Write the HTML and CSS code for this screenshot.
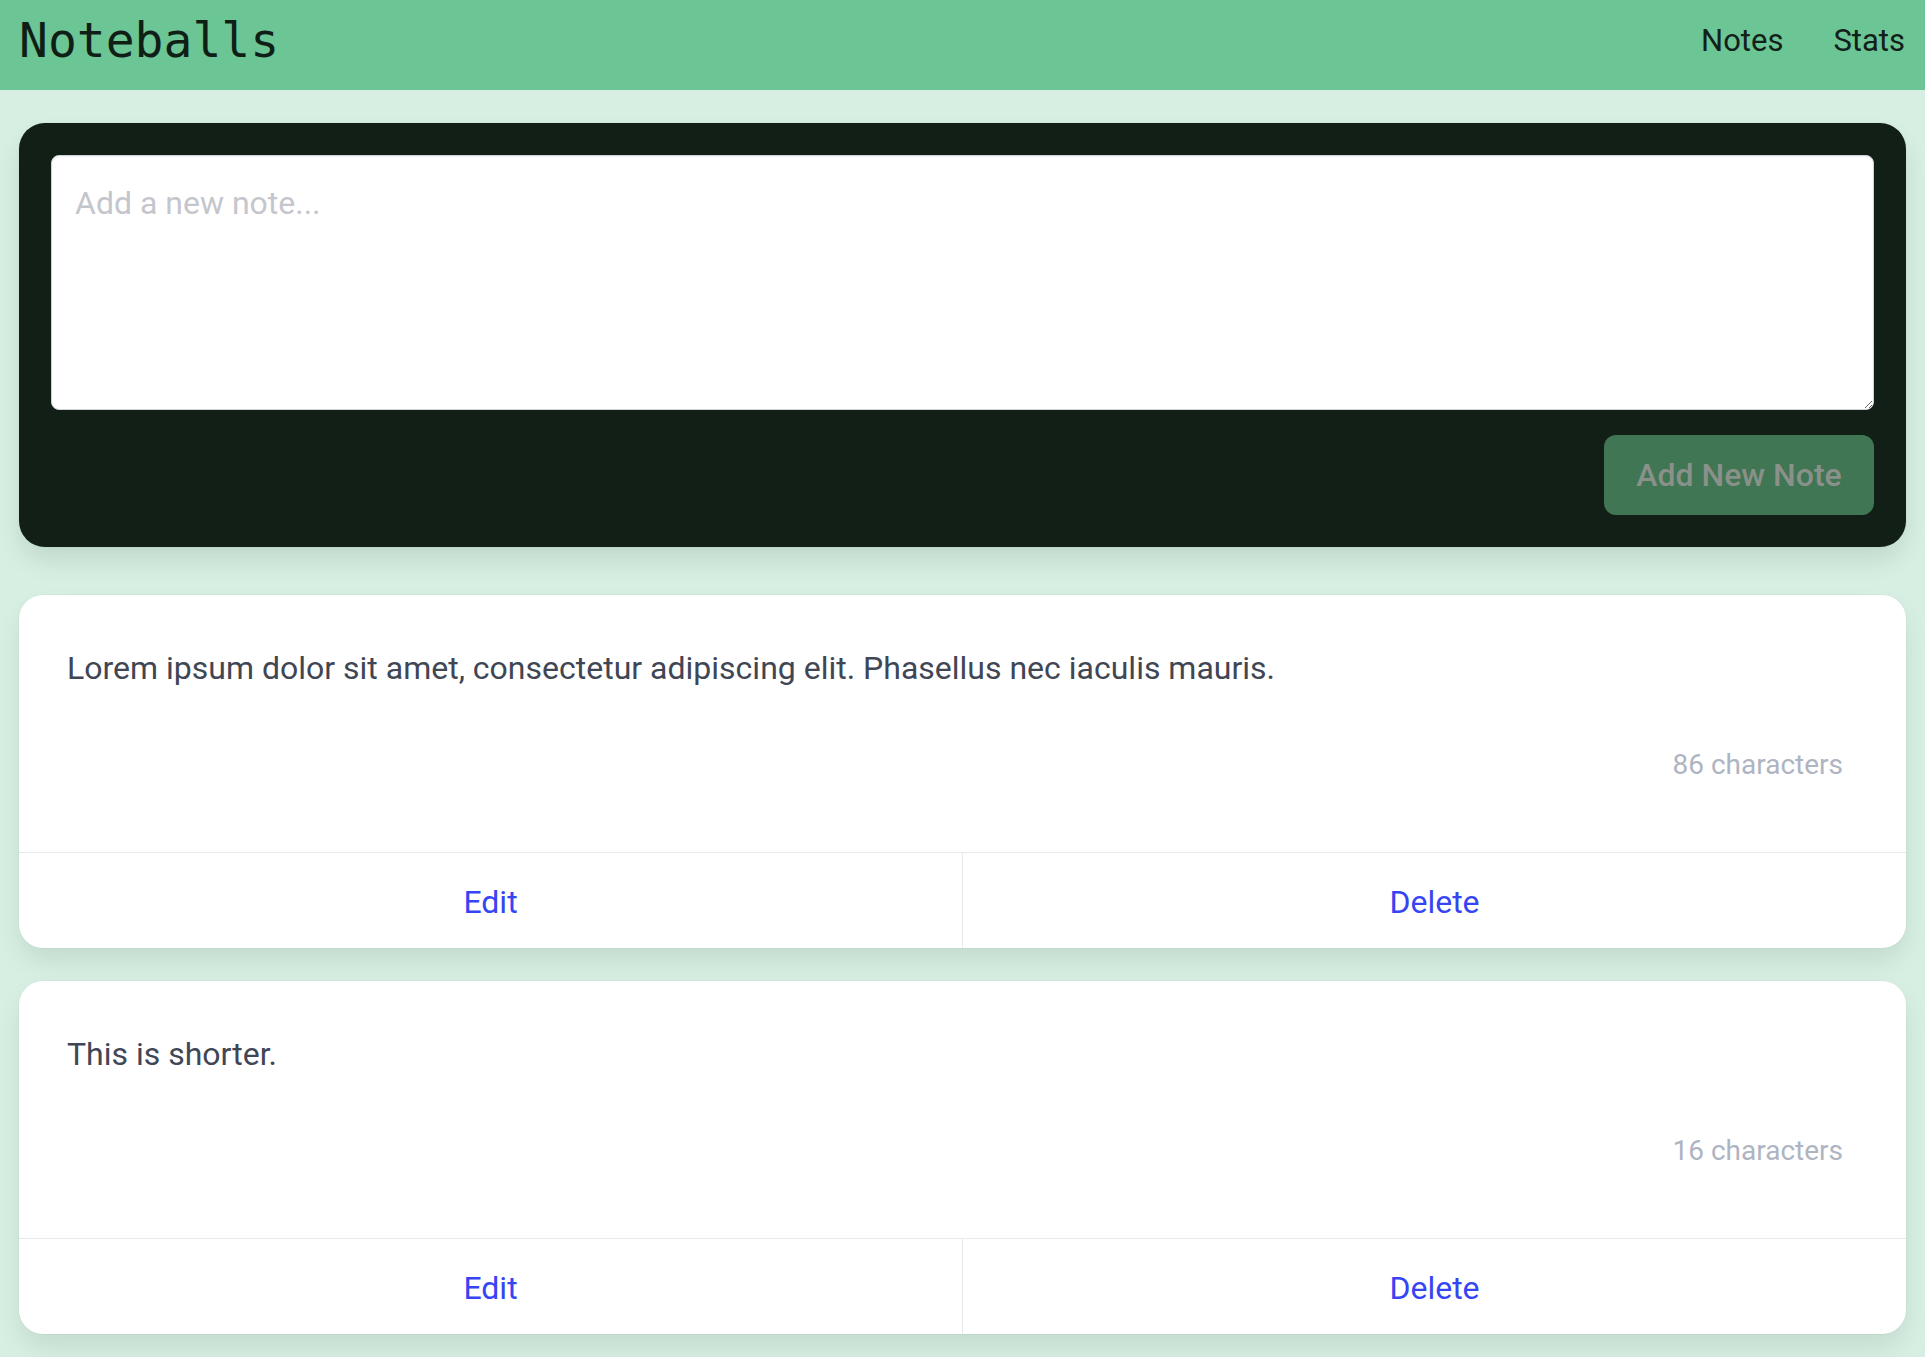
FILE: index.html
```html
<!DOCTYPE html>
<html lang="en">
<head>
<meta charset="utf-8">
<title>Noteballs</title>
<link rel="stylesheet" href="styles.css">
</head>
<body>
<nav class="navbar">
  <div class="brand">Noteballs</div>
  <div class="nav-links">
    <a class="nav-link" href="#">Notes</a>
    <a class="nav-link" href="#">Stats</a>
  </div>
</nav>
<main class="page">
  <section class="add-card">
    <textarea class="note-input" placeholder="Add a new note..."></textarea>
    <div class="add-actions">
      <button class="add-btn" disabled>Add New Note</button>
    </div>
  </section>

  <article class="note-card">
    <div class="note-content">
      <p class="note-text">Lorem ipsum dolor sit amet, consectetur adipiscing elit. Phasellus nec iaculis mauris.</p>
      <div class="note-chars">86 characters</div>
    </div>
    <footer class="note-footer">
      <a class="footer-item" href="#">Edit</a>
      <a class="footer-item" href="#">Delete</a>
    </footer>
  </article>

  <article class="note-card">
    <div class="note-content">
      <p class="note-text">This is shorter.</p>
      <div class="note-chars">16 characters</div>
    </div>
    <footer class="note-footer">
      <a class="footer-item" href="#">Edit</a>
      <a class="footer-item" href="#">Delete</a>
    </footer>
  </article>
</main>
</body>
</html>
```

FILE: styles.css
```css
* { box-sizing: border-box; }

html, body {
  margin: 0;
  padding: 0;
}

body {
  background: #d6efe2;
  font-family: Roboto, "Liberation Sans", sans-serif;
  color: #404654;
  min-height: 1357px;
}

.navbar {
  height: 90px;
  background: #6cc594;
  display: flex;
  align-items: center;
  justify-content: space-between;
  padding: 0 20px 0 19px;
}

.brand {
  font-family: "DejaVu Sans Mono", "Liberation Mono", monospace;
  font-size: 48px;
  color: #0f1f16;
  line-height: 1;
  padding-bottom: 10px;
}

.nav-links {
  display: flex;
  gap: 50px;
  padding-bottom: 9px;
}

.nav-link {
  font-size: 31px;
  color: #112018;
  text-decoration: none;
}

.page {
  padding: 33px 19px 24px;
}

.add-card {
  background: #111f16;
  border-radius: 26px;
  padding: 32px;
  box-shadow: 0 14px 28px -4px rgba(10, 20, 14, 0.12), 0 0 0 1px rgba(10, 10, 10, 0.02);
  margin-bottom: 48px;
}

.note-input {
  display: block;
  width: 100%;
  height: 255px;
  border: 1px solid #cfd2da;
  border-radius: 8px;
  background: #fff;
  padding: 23px 21px 20px 23px;
  font-family: Roboto, "Liberation Sans", sans-serif;
  font-size: 32px;
  line-height: 1.5;
  color: #404654;
  box-shadow: inset 0 1px 2px rgba(10, 10, 10, 0.05);
  resize: vertical;
  outline: none;
}

.note-input::placeholder {
  color: #c5c6cc;
}

.add-actions {
  display: flex;
  justify-content: flex-end;
  margin-top: 25px;
}

.add-btn {
  width: 270px;
  height: 80px;
  border: none;
  border-radius: 12px;
  background: #407653;
  color: #8a918a;
  font-family: Roboto, "Liberation Sans", sans-serif;
  font-size: 32px;
  font-weight: 500;
  cursor: not-allowed;
}

.note-card {
  background: #fff;
  border-radius: 24px;
  box-shadow: 0 14px 28px -4px rgba(10, 20, 14, 0.1), 0 0 0 1px rgba(10, 10, 10, 0.02);
  margin-bottom: 33px;
  overflow: hidden;
}

.note-content {
  padding: 49px 48px 66px;
}

.note-text {
  margin: 0;
  font-size: 32px;
  line-height: 48px;
  color: #404654;
}

.note-chars {
  margin-top: 52px;
  padding-right: 15px;
  text-align: right;
  font-size: 28px;
  line-height: 42px;
  color: #aeb4c1;
}

.note-footer {
  display: flex;
  border-top: 1px solid #e8e8ef;
  height: 96px;
}

.footer-item {
  flex: 1 1 0;
  display: flex;
  align-items: center;
  justify-content: center;
  padding-top: 3px;
  font-size: 32px;
  color: #3645f3;
  text-decoration: none;
}

.footer-item + .footer-item {
  border-left: 1px solid #e8e8ef;
}
```
